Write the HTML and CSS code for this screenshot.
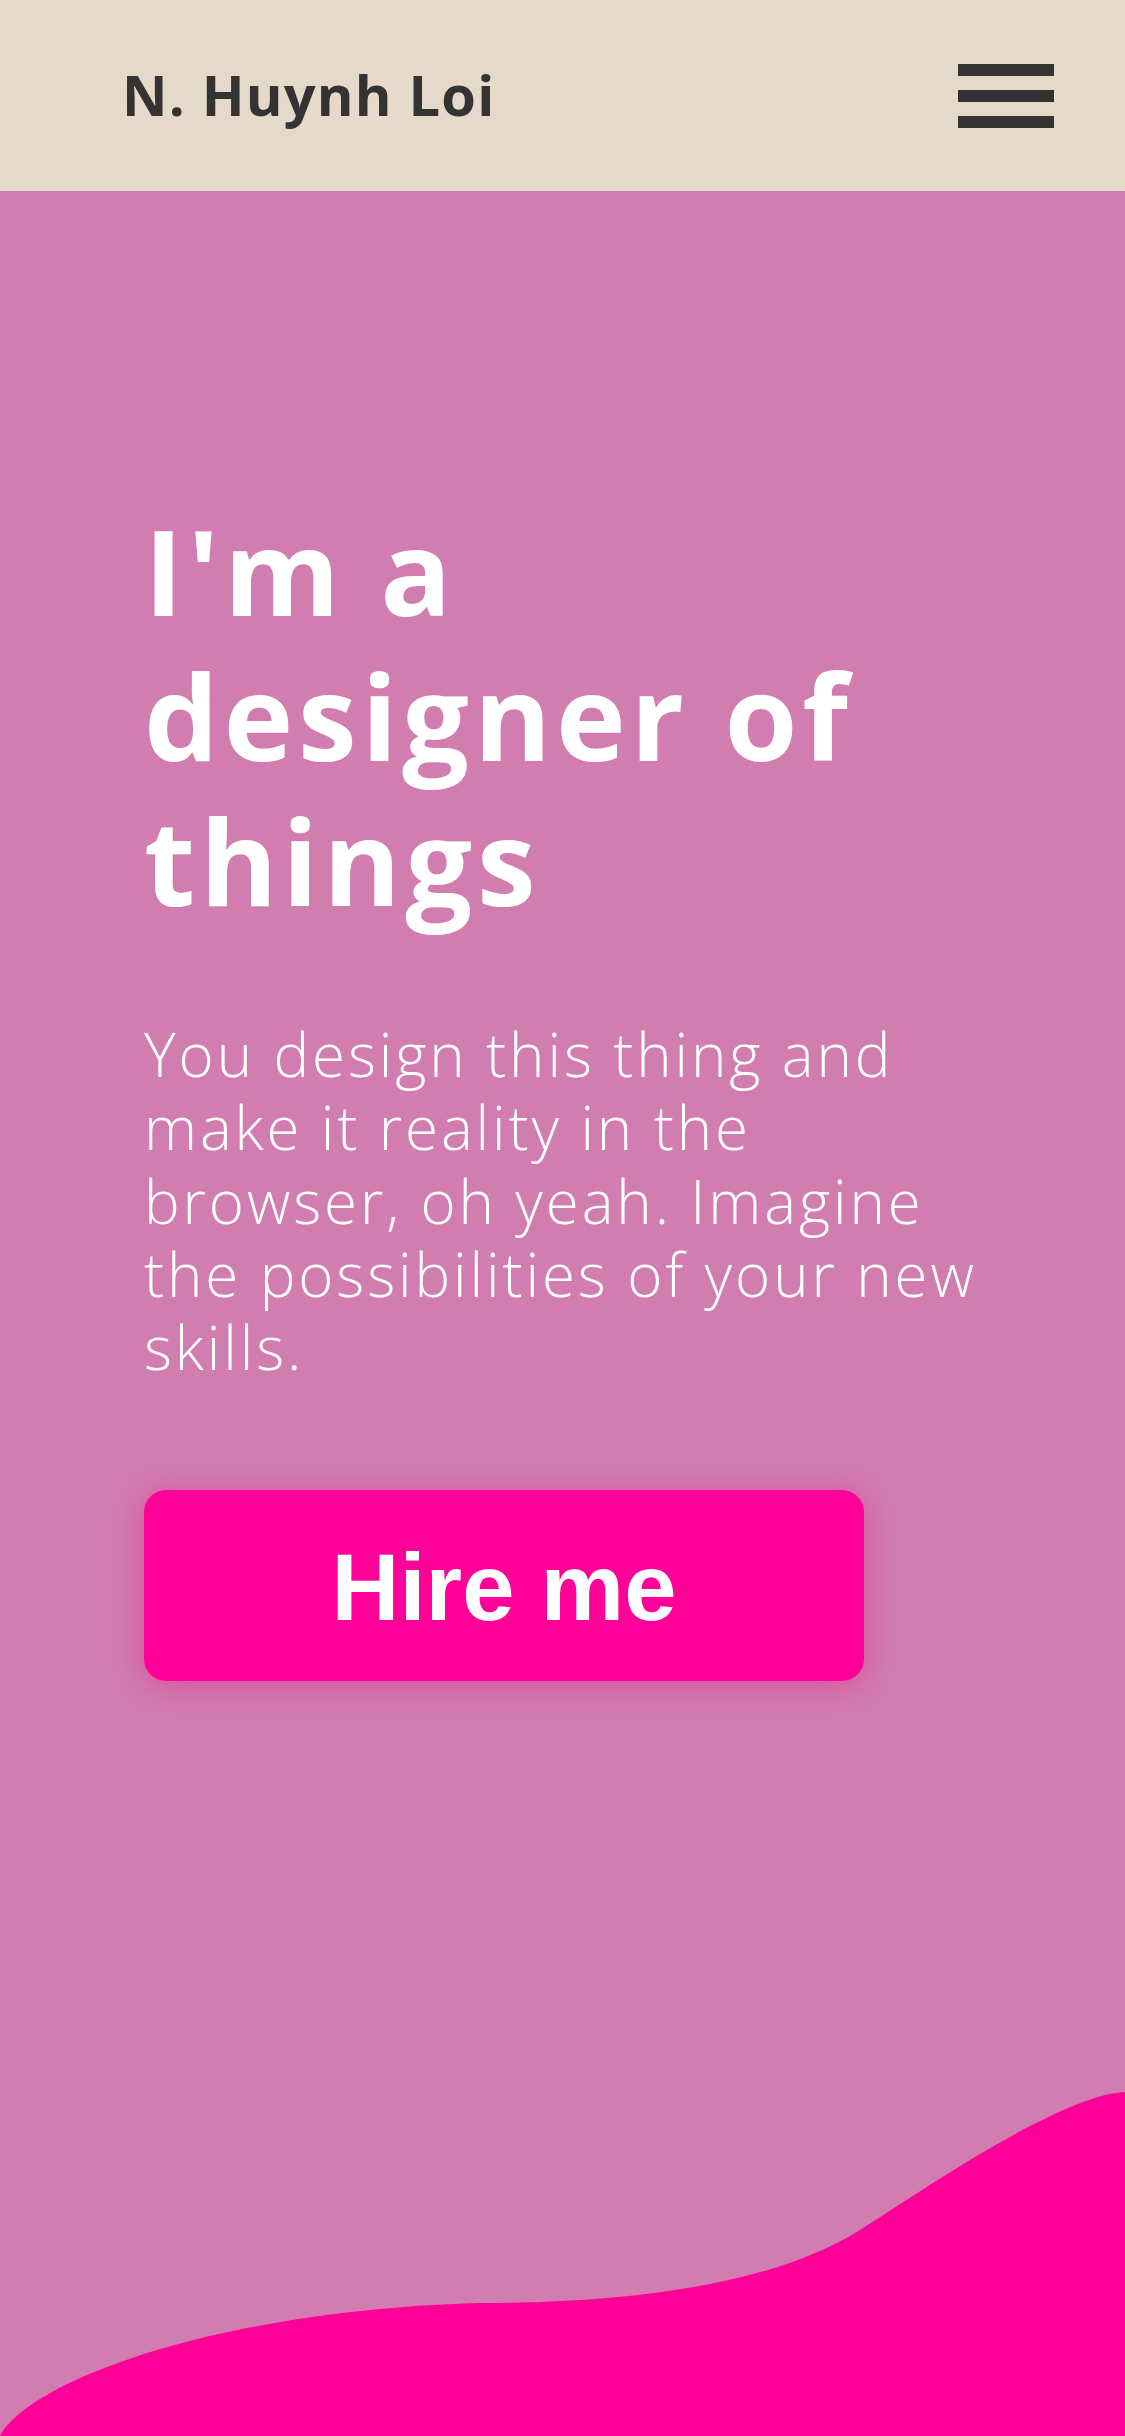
FILE: index.html
```html
<!DOCTYPE html>
<html lang="en">
<head>
<meta charset="utf-8">
<title>N. Huynh Loi</title>
<link rel="stylesheet" href="styles.css">
</head>
<body>
<header class="topbar">
  <div class="logo">N. Huynh Loi</div>
  <button class="menu" aria-label="Menu">
    <span class="bar"></span>
    <span class="bar"></span>
    <span class="bar"></span>
  </button>
</header>
<main class="hero">
  <div class="content">
    <h1 class="title">I'm a<br>designer of<br>things</h1>
    <p class="lead">You design this thing and<br>make it reality in the<br>browser, oh yeah. Imagine<br>the possibilities of your new<br>skills.</p>
    <a class="cta" href="#">Hire me</a>
  </div>
  <svg class="wave" viewBox="0 0 1125 346" preserveAspectRatio="none" aria-hidden="true">
    <path d="M0,346 C30,290 220,220 480,213 C650,213 780,190 860,140 C920,102 1060,5 1125,2 L1125,346 Z" fill="#ff0099"/>
  </svg>
</main>
</body>
</html>
```
FILE: styles.css
```css
* { box-sizing: border-box; }
html, body { margin: 0; padding: 0; }
body {
  width: 1125px;
  height: 2436px;
  overflow: hidden;
  font-family: "Open Sans", "Noto Sans", sans-serif;
  background: #d17db0;
}
.topbar {
  height: 191px;
  background: #e5d9ca;
  display: flex;
  align-items: center;
  justify-content: space-between;
  padding: 0 71px 0 122px;
}
.logo {
  font-family: "Open Sans", sans-serif;
  font-weight: 700;
  font-size: 56px;
  color: #333333;
  letter-spacing: 1.2px;
  margin-top: -4px;
}
.menu {
  background: none;
  border: 0;
  padding: 0;
  width: 96px;
  display: flex;
  flex-direction: column;
  gap: 14px;
  cursor: pointer;
}
.bar {
  display: block;
  width: 96px;
  height: 12px;
  background: #333333;
}
.hero {
  height: 2245px;
  display: flex;
  flex-direction: column;
  background: #d17db0;
}
.content {
  padding: 307px 0 0 144px;
}
.title {
  margin: 0;
  color: #ffffff;
  font-family: "Open Sans", sans-serif;
  font-weight: 700;
  font-size: 118px;
  line-height: 145px;
  letter-spacing: 4.8px;
}
.lead {
  margin: 85px 0 0;
  color: #ffffff;
  font-family: "Open Sans", sans-serif;
  font-weight: 300;
  font-size: 60px;
  line-height: 73.3px;
  letter-spacing: 2.9px;
}
.cta {
  margin-top: 106px;
  width: 720px;
  height: 191px;
  display: flex;
  align-items: center;
  justify-content: center;
  padding-top: 4px;
  background: #ff0099;
  border-radius: 22px;
  box-shadow: 0 4px 30px rgba(230, 20, 140, 0.45);
  color: #ffffff;
  text-decoration: none;
  font-family: "Liberation Sans", Arial, sans-serif;
  font-weight: 700;
  font-size: 94px;
}
.wave {
  display: block;
  margin-top: auto;
  width: 1125px;
  height: 346px;
}
```
